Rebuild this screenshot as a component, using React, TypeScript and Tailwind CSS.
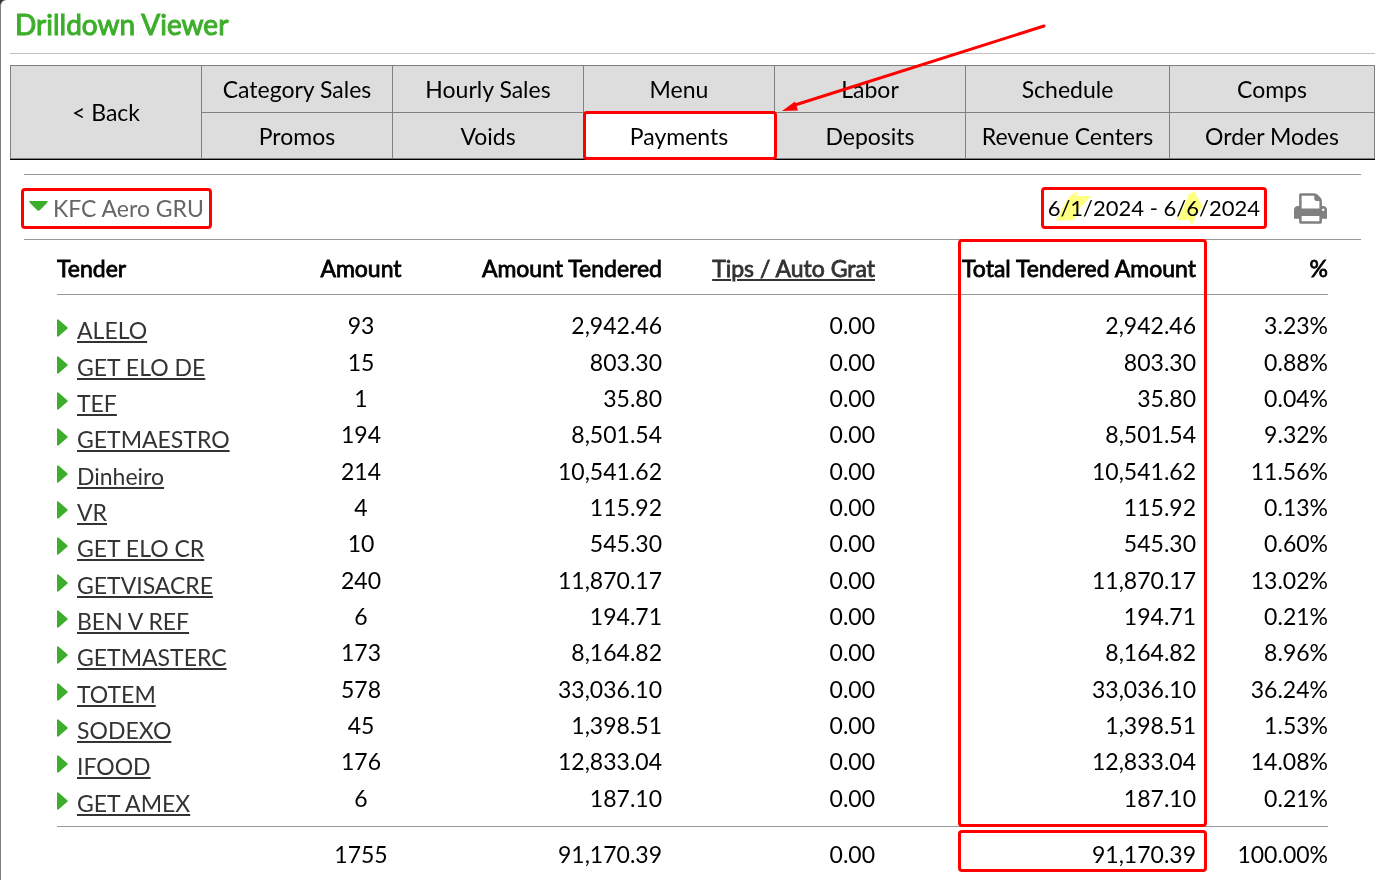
const navTop = ['Category Sales', 'Hourly Sales', 'Menu', 'Labor', 'Schedule', 'Comps'];
const navBottom = ['Promos', 'Voids', 'Payments', 'Deposits', 'Revenue Centers', 'Order Modes'];

const tenders: [string, string, string, string, string][] = [
  ['ALELO', '93', '2,942.46', '0.00', '3.23%'],
  ['GET ELO DE', '15', '803.30', '0.00', '0.88%'],
  ['TEF', '1', '35.80', '0.00', '0.04%'],
  ['GETMAESTRO', '194', '8,501.54', '0.00', '9.32%'],
  ['Dinheiro', '214', '10,541.62', '0.00', '11.56%'],
  ['VR', '4', '115.92', '0.00', '0.13%'],
  ['GET ELO CR', '10', '545.30', '0.00', '0.60%'],
  ['GETVISACRE', '240', '11,870.17', '0.00', '13.02%'],
  ['BEN V REF', '6', '194.71', '0.00', '0.21%'],
  ['GETMASTERC', '173', '8,164.82', '0.00', '8.96%'],
  ['TOTEM', '578', '33,036.10', '0.00', '36.24%'],
  ['SODEXO', '45', '1,398.51', '0.00', '1.53%'],
  ['IFOOD', '176', '12,833.04', '0.00', '14.08%'],
  ['GET AMEX', '6', '187.10', '0.00', '0.21%'],
];

function PrintIcon() {
  return (
    <svg className="h-[31px] w-[33px]" viewBox="64 128 1664 1536" fill="#808080" fillRule="evenodd" aria-hidden="true">
      <path d="M448 1536h896v-256h-896v256zm0-640h896v-384h-160q-40 0-68-28t-28-68v-160h-640v640zm1152 64q0-26-19-45t-45-19-45 19-19 45 19 45 45 19 45-19 19-45zm128 0v416q0 13-9.5 22.5t-22.5 9.5h-224v160q0 40-28 68t-68 28h-960q-40 0-68-28t-28-68v-160h-224q-13 0-22.5-9.5t-9.5-22.5v-416q0-79 56.5-135.5t135.5-56.5h64v-544q0-40 28-68t68-28h672q40 0 88 20t76 48l152 152q28 28 48 76t20 88v256h64q79 0 135.5 56.5t56.5 135.5z" />
    </svg>
  );
}

function Arrow() {
  return (
    <svg className="pointer-events-none absolute bottom-[46px] left-full z-20 h-[92px] w-[275px]" viewBox="0 0 275 92" aria-hidden="true">
      <path d="M20 84 269 5" stroke="#f00" strokeWidth="3" strokeLinecap="round" />
      <path d="M7 90 20 80.500 23 89.500Z" fill="#f00" />
    </svg>
  );
}

function NavItem({ label }: { label: string }) {
  const active = label === 'Payments';
  return (
    <li className="relative flex">
      <a
        href="#"
        className={
          'flex flex-1 items-center justify-center border-r border-b border-[#808080] ' +
          (active ? 'bg-white' : 'bg-[#ddd]')
        }
      >
        {label}
      </a>
      {active && (
        <>
          <span className="pointer-events-none absolute -top-0.5 -right-0.5 -bottom-px -left-px z-10 rounded-sm border-3 border-[#f00]" />
          <Arrow />
        </>
      )}
    </li>
  );
}

export default function App() {
  return (
    <div className="bg-[#333]">
      <div className="min-h-screen rounded-tl-md border-l border-[#808080] bg-white pr-[7px] pl-[9px] font-[Lato,sans-serif] text-[23px] leading-[30px] text-black">
        <header className="border-b border-[#c0c0c0] px-[5px] pt-[7px] pb-3">
          <h1 className="text-[28px] leading-[34px] text-[#3dae2b] [-webkit-text-stroke:1px_#3dae2b]">Drilldown Viewer</h1>
        </header>

        <nav className="mt-[11px] border-b border-black" aria-label="Reports">
          <ul className="grid grid-cols-[191fr_191fr_191fr_191fr_191fr_204fr_205fr] grid-rows-[47px_46px] border-t border-l border-[#808080]">
            <li className="row-span-2 flex">
              <a href="#" className="flex flex-1 items-center justify-center border-r border-b border-[#808080] bg-[#ddd]">
                &lt; Back
              </a>
            </li>
            {navTop.map((l) => (
              <NavItem key={l} label={l} />
            ))}
            {navBottom.map((l) => (
              <NavItem key={l} label={l} />
            ))}
          </ul>
        </nav>

        <main className="mt-3.5 mr-3.5 ml-3.5">
          <section className="flex h-[66px] items-center justify-between border-t border-b border-[#999] pt-0.5">
            <button type="button" className="-ml-[3px] flex h-[41px] items-center gap-[5px] rounded-sm border-3 border-[#f00] pr-[5px] pl-[5px] text-[#666]">
              <svg className="mb-1 h-2.5 w-[19px]" viewBox="0 0 19 10" aria-hidden="true">
                <path d="M1 0H18Q19.500 .5 18 2L11 9Q9.500 10.500 8 9L1 2Q-.5.5 1 0Z" fill="#3dae2b" />
              </svg>
              KFC Aero GRU
            </button>
            <div className="flex items-center gap-[27px] pr-[34px]">
              <p className="relative h-[42px] rounded-sm border-3 border-[#f00] px-1 text-[22px] leading-9">
                6/1/2024 - 6/6/2024
                <svg className="pointer-events-none absolute -top-[3px] -left-[3px] h-[42px] w-[227px] mix-blend-multiply" viewBox="0 0 227 42" aria-hidden="true">
                  <path d="M15 34 24 16 29 9 37 4 35 9H50L39 21 33 33Z" fill="#ffff80" />
                  <path d="M136 33 143 19 148 7 154 4 156 10 162 19 155 28 151 38 148 33Z" fill="#ffff80" />
                </svg>
              </p>
              <button type="button" aria-label="Print">
                <PrintIcon />
              </button>
            </div>
          </section>

          <div className="pr-[33px] pl-[33px]">
            <table className="h-[641px] w-full table-fixed border-collapse text-right">
              <colgroup>
                <col className="w-[224px]" />
                <col className="w-[160px]" />
                <col className="w-[221px]" />
                <col className="w-[213px]" />
                <col className="w-[321px]" />
                <col className="w-[132px]" />
              </colgroup>
              <thead className="[-webkit-text-stroke:0.8px_currentColor]">
                <tr className="h-[54px] border-b border-[#999] whitespace-nowrap [&>th]:pt-0.5 [&>th]:font-normal">
                  <th className="text-left">Tender</th>
                  <th className="text-center">Amount</th>
                  <th>Amount Tendered</th>
                  <th>
                    <a href="#" className="text-[#333] underline decoration-2 underline-offset-2">Tips / Auto Grat</a>
                  </th>
                  <th className="relative">
                    Total Tendered Amount
                    <span className="pointer-events-none absolute -top-px -right-[11px] h-[588px] w-[249px] rounded-sm border-3 border-[#f00]" />
                  </th>
                  <th>%</th>
                </tr>
              </thead>
              <tbody>
                <tr className="h-[13px]" aria-hidden="true">
                  <td colSpan={6} />
                </tr>
                {tenders.map(([name, count, amount, tips, pct]) => (
                  <tr key={name}>
                    <td className="text-left">
                      <span className="flex items-center gap-[9px]">
                        <svg className="mt-1.5 h-[18px] w-[11px]" viewBox="0 0 11 18" aria-hidden="true">
                          <path d="M0 1Q.5-.5 2 1L10 8Q11.500 9 10 10L2 17Q.5 18.500 0 17Z" fill="#3dae2b" />
                        </svg>
                        <a href="#" className="mt-2 -mb-0.5 leading-7 text-[#333] underline decoration-2 underline-offset-2">
                          {name}
                        </a>
                      </span>
                    </td>
                    <td className="text-center">{count}</td>
                    <td>{amount}</td>
                    <td>{tips}</td>
                    <td>{amount}</td>
                    <td>{pct}</td>
                  </tr>
                ))}
                <tr className="h-2.5" aria-hidden="true">
                  <td colSpan={6} />
                </tr>
              </tbody>
              <tfoot>
                <tr className="h-[55px] border-t border-[#999]">
                  <td />
                  <td className="text-center">1755</td>
                  <td>91,170.39</td>
                  <td>0.00</td>
                  <td className="relative">
                    91,170.39
                    <span className="pointer-events-none absolute top-[3px] -right-[11px] h-[42px] w-[249px] rounded-sm border-3 border-[#f00]" />
                  </td>
                  <td>100.00%</td>
                </tr>
              </tfoot>
            </table>
          </div>
        </main>
      </div>
    </div>
  );
}
